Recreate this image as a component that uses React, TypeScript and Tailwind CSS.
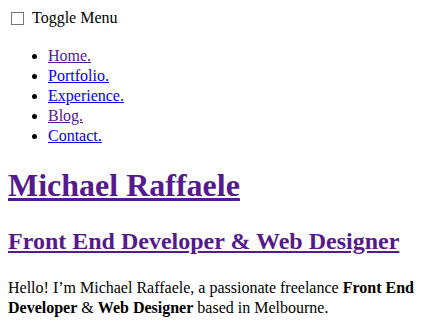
export default function App() {
  const links = [
    { label: "Home.", visited: true },
    { label: "Portfolio.", visited: false },
    { label: "Experience.", visited: false },
    { label: "Blog.", visited: true },
    { label: "Contact.", visited: false },
  ];

  return (
    <div className="min-h-screen bg-white p-2 font-['Liberation_Serif',serif] text-base leading-5 text-black">
      {/* Menu toggle */}
      <label className="flex items-center">
        <input
          type="checkbox"
          className="m-[3px_3px_3px_3px] h-[13px] w-[13px] appearance-none border border-[#767676] bg-white"
        />
        <span className="ml-[5px]">Toggle Menu</span>
      </label>

      <nav>
        <ul className="mt-[18px] mb-4 list-disc pl-10">
          {links.map((l) => (
            <li key={l.label}>
              <a href="#" className={`underline ${l.visited ? "text-[#551a8b]" : "text-[#0000ee]"}`}>
                {l.label}
              </a>
            </li>
          ))}
        </ul>
      </nav>

      <main>
        <h1 className="mt-[19px] mb-[21px] text-[32px] font-bold leading-10">
          <a href="#" className="text-[#551a8b] underline">Michael Raffaele</a>
        </h1>
        <h2 className="mt-[18px] mb-[22px] text-2xl font-bold leading-[30px]">
          <a href="#" className="text-[#551a8b] underline">Front End Developer &amp; Web Designer</a>
        </h2>
        <p className="my-4">
          Hello! I’m Michael Raffaele, a passionate freelance <b>Front End Developer</b> &amp; <b>Web Designer</b> based in Melbourne.
        </p>
      </main>
    </div>
  );
}
